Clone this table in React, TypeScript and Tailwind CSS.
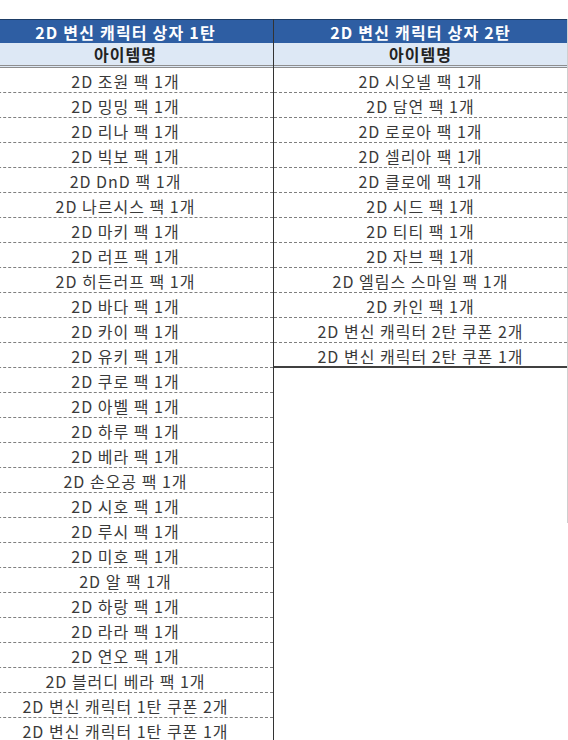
import React from "react";

const box1 = [
  "2D 조원 팩 1개",
  "2D 밍밍 팩 1개",
  "2D 리나 팩 1개",
  "2D 빅보 팩 1개",
  "2D DnD 팩 1개",
  "2D 나르시스 팩 1개",
  "2D 마키 팩 1개",
  "2D 러프 팩 1개",
  "2D 히든러프 팩 1개",
  "2D 바다 팩 1개",
  "2D 카이 팩 1개",
  "2D 유키 팩 1개",
  "2D 쿠로 팩 1개",
  "2D 아벨 팩 1개",
  "2D 하루 팩 1개",
  "2D 베라 팩 1개",
  "2D 손오공 팩 1개",
  "2D 시호 팩 1개",
  "2D 루시 팩 1개",
  "2D 미호 팩 1개",
  "2D 알 팩 1개",
  "2D 하랑 팩 1개",
  "2D 라라 팩 1개",
  "2D 연오 팩 1개",
  "2D 블러디 베라 팩 1개",
  "2D 변신 캐릭터 1탄 쿠폰 2개",
  "2D 변신 캐릭터 1탄 쿠폰 1개",
];

const box2 = [
  "2D 시오넬 팩 1개",
  "2D 담연 팩 1개",
  "2D 로로아 팩 1개",
  "2D 셀리아 팩 1개",
  "2D 클로에 팩 1개",
  "2D 시드 팩 1개",
  "2D 티티 팩 1개",
  "2D 자브 팩 1개",
  "2D 엘림스 스마일 팩 1개",
  "2D 카인 팩 1개",
  "2D 변신 캐릭터 2탄 쿠폰 2개",
  "2D 변신 캐릭터 2탄 쿠폰 1개",
];

function BoxTable({ title, items }: { title: string; items: string[] }) {
  return (
    <div className="flex flex-col">
      <div className="h-[24px] flex items-center justify-center bg-[#2e5ea3] border-t border-[#1d3d66] text-white font-bold text-[16px] tracking-[1.2px]">
        {title}
      </div>
      <div className="h-[25px] flex items-center justify-center bg-[#dde8f5] border-b-[3px] border-double border-[#8e8e8e] text-[#222] font-bold text-[16px] tracking-[1px]">
        아이템명
      </div>
      {items.map((item, i) => (
        <div
          key={item}
          className={
            i === items.length - 1
              ? "h-[25px] pt-[2px] flex items-center justify-center border-b-2 border-[#404040] text-[#3a3a3a] text-[16px] tracking-[1px]"
              : "h-[25px] pt-[2px] flex items-center justify-center border-b border-dashed border-[#808080] text-[#3a3a3a] text-[16px] tracking-[1px]"
          }
        >
          {item}
        </div>
      ))}
    </div>
  );
}

export default function App() {
  return (
    <div
      className="w-[568px] h-[740px] overflow-hidden bg-white leading-none"
      style={{ fontFamily: '"Noto Sans CJK KR", "Noto Sans", sans-serif' }}
    >
      <div className="flex pt-[19px] -ml-[22px]">
        <div className="w-[296px] border-r border-[#333]">
          <BoxTable title="2D 변신 캐릭터 상자 1탄" items={box1} />
        </div>
        <div className="w-[294px] h-[504px] border-r border-[#cfcfcf]">
          <BoxTable title="2D 변신 캐릭터 상자 2탄" items={box2} />
        </div>
      </div>
    </div>
  );
}
